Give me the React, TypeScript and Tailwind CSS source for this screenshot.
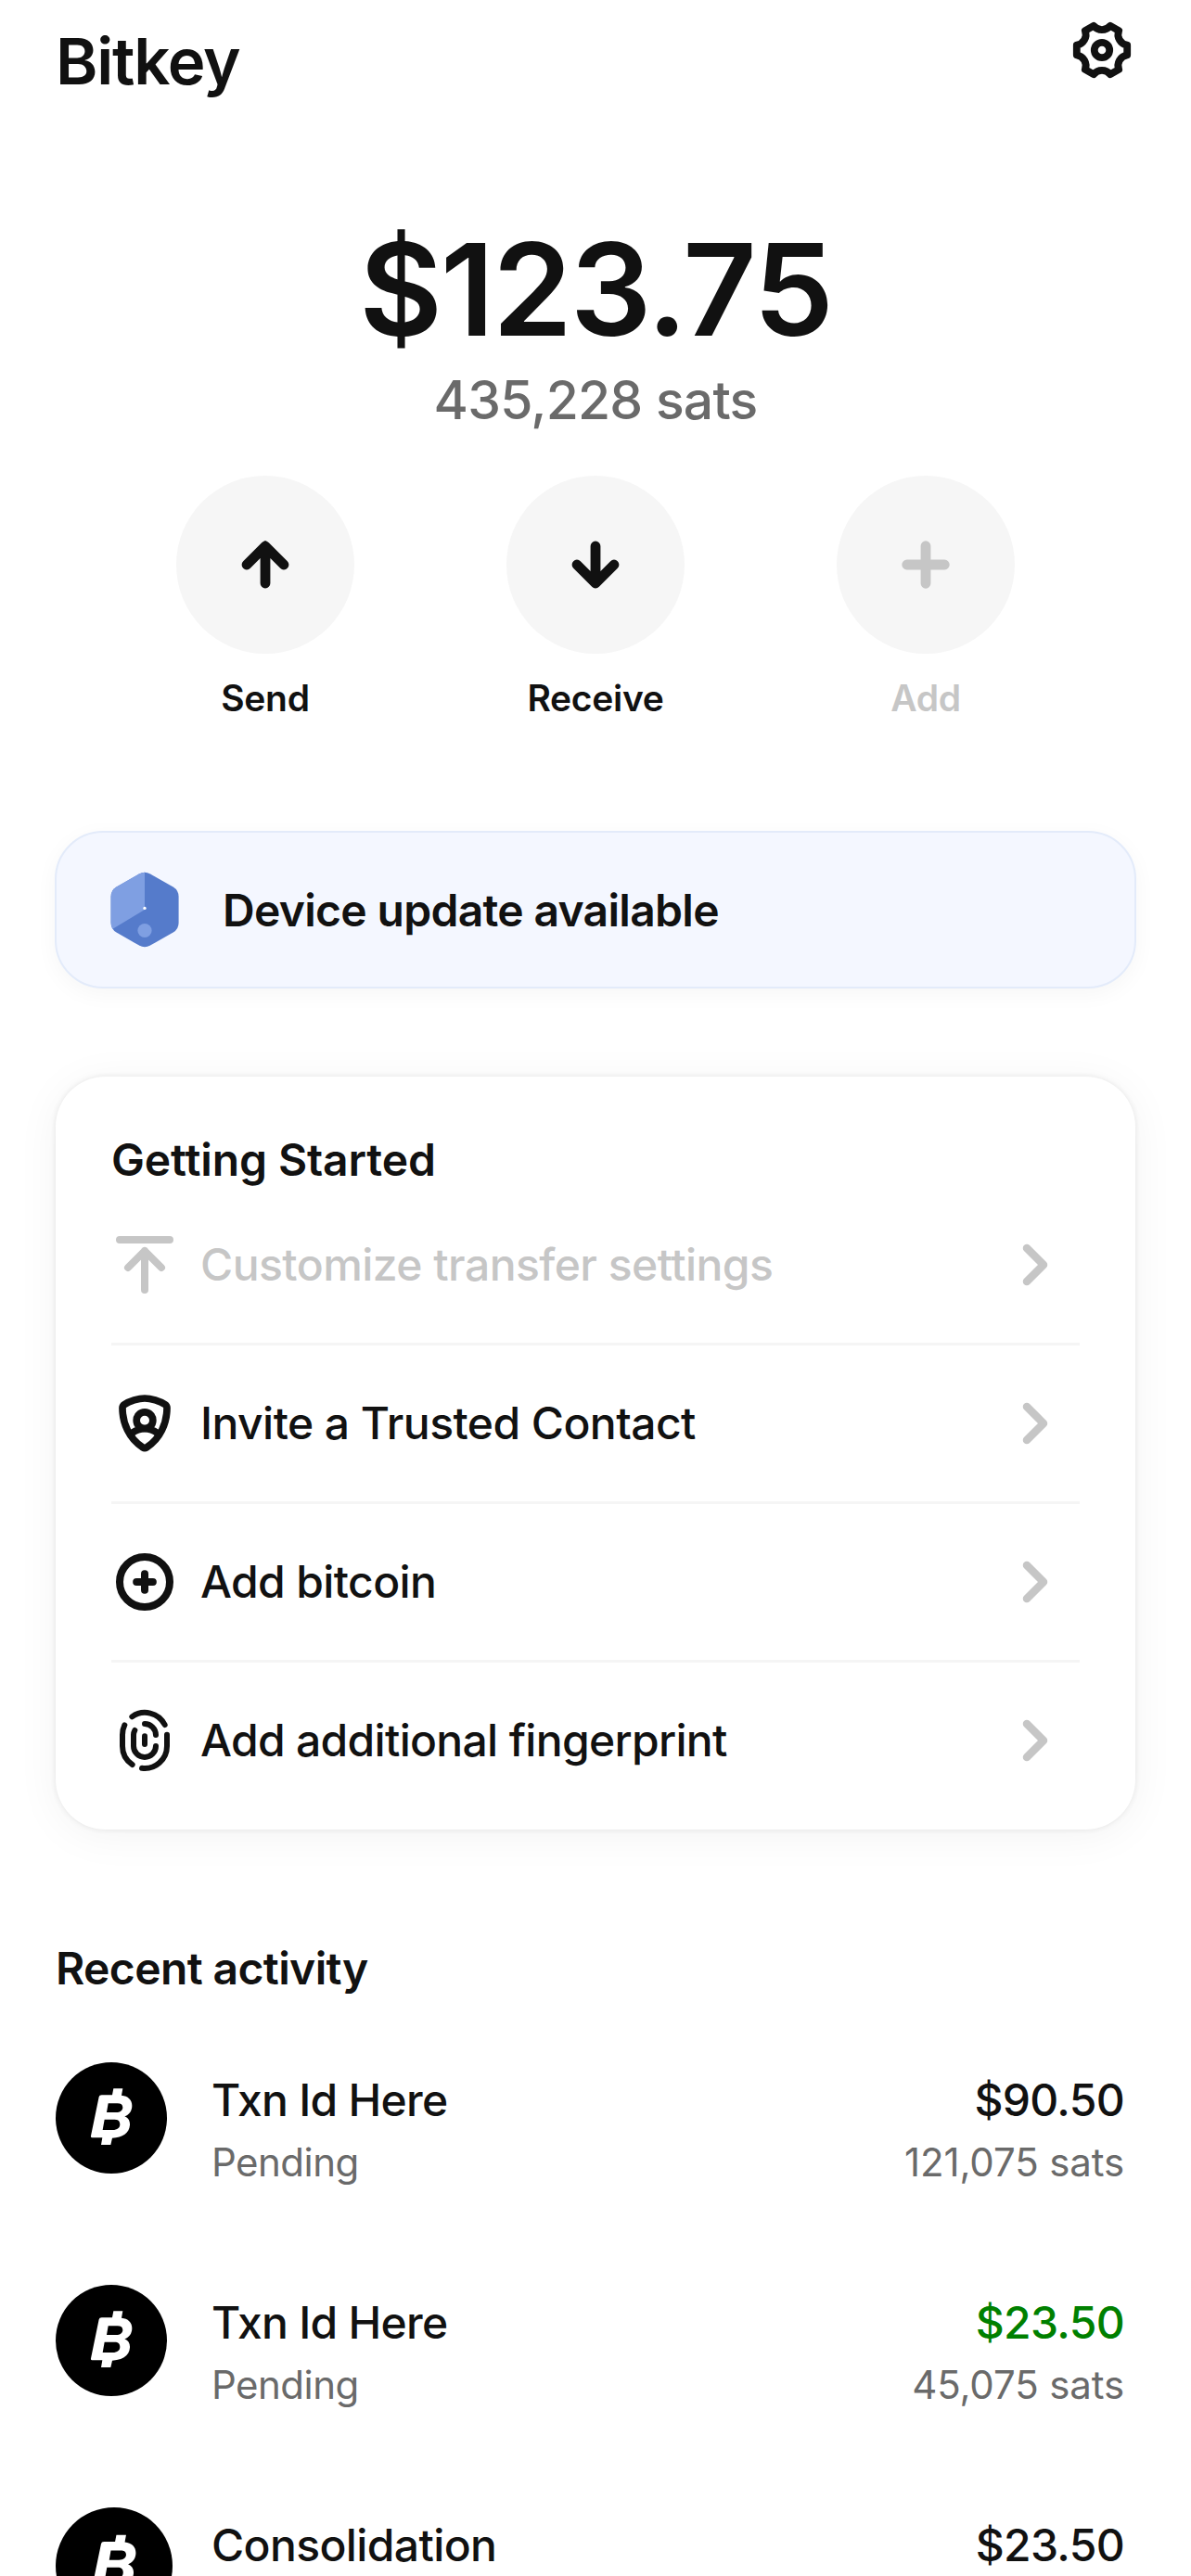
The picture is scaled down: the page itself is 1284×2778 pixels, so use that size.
import type { ReactNode } from 'react';

type IconProps = { className?: string };

function GearIcon() {
  return (
    <svg className="size-[72px]" viewBox="-36 -36 72 72" fill="none" stroke="#111111" strokeWidth="7.8" strokeLinejoin="round">
      <path d="M27.2 -5.3L27.2 5.3A11.500 11.500 0 0 0 18.2 20.9L9 26.2A11.500 11.500 0 0 0 -9 26.2L-18.2 20.9A11.500 11.500 0 0 0 -27.2 5.3L-27.2 -5.3A11.500 11.500 0 0 0 -18.2 -20.9L-9 -26.2A11.500 11.500 0 0 0 9 -26.2L18.2 -20.9A11.500 11.500 0 0 0 27.2 -5.3Z" />
      <circle r="8.2" />
    </svg>
  );
}

function ActionGlyph({ d }: { d: string }) {
  return (
    <svg className="size-[72px]" viewBox="-36 -36 72 72" fill="none" stroke="currentColor" strokeWidth="10.8" strokeLinecap="round" strokeLinejoin="round">
      <path d={d} />
    </svg>
  );
}

function DeviceIcon() {
  return (
    <svg className="size-[84px]" viewBox="114 939 84 84">
      <defs>
        <clipPath id="device-shape">
          <path d="M119.6 967Q119.6 960 125.5 956.4L150 942.4Q156 939 162 942.4L186.7 956.4Q192.6 960 192.6 967V995Q192.6 1002 186.7 1005.6L162 1019.6Q156 1023 150 1019.6L125.5 1005.6Q119.6 1002 119.6 995Z" />
        </clipPath>
      </defs>
      <g clipPath="url(#device-shape)">
        <rect x="114" y="936" width="84" height="90" fill="#557bcb" />
        <path d="M156 936V981L117 1004.5V936Z" fill="#7f9fe2" />
        <circle cx="156" cy="1003.5" r="7.6" fill="#7f9fe2" />
        <circle cx="156" cy="979.4" r="1.7" fill="#ffffff" />
      </g>
    </svg>
  );
}

function LineIcon({ viewBox, width = 24, children }: { viewBox: string; width?: number; children: ReactNode }) {
  return (
    <svg className="size-[72px] shrink-0" viewBox={viewBox} fill="none" stroke="currentColor" strokeWidth={width} strokeLinecap="round" strokeLinejoin="round">
      {children}
    </svg>
  );
}

const TransferIcon = () => (
  <LineIcon viewBox="60 84 216 216">
    <path d="M87 111H249M168 273V147M114 201L168 147L222 201" />
  </LineIcon>
);

const ShieldIcon = () => (
  <LineIcon viewBox="60 57 216 216" width={23}>
    <path d="M168 84C148 84 119 93 102 104Q96 108 96 115C96 165 118 215 162 243Q168 247 174 243C218 215 240 165 240 115Q240 108 234 104C217 93 188 84 168 84Z" />
    <circle cx="168" cy="155" r="26.5" />
    <path d="M126 197Q168 167 210 197" strokeLinecap="butt" />
  </LineIcon>
);

const PlusCircleIcon = () => (
  <LineIcon viewBox="60 90 216 216">
    <circle cx="168" cy="198" r="81" />
    <path d="M141.500 198H194.500M168 171.500V224.500" />
  </LineIcon>
);

const FingerprintIcon = () => (
  <LineIcon viewBox="60 603 216 216" width={18}>
    <path d="M127 634A72 72 0 0 1 233 660" />
    <path d="M103 661A72 72 0 0 0 96 693V729A72 72 0 0 0 128 789" />
    <path d="M240 692V729A72 72 0 0 1 159 800.500" />
    <path d="M168 657A36 36 0 0 1 204 693" />
    <path d="M136 678Q132 685 132 693V729A36 36 0 0 0 204 729" />
    <path d="M168 697V723" />
  </LineIcon>
);

function Chevron() {
  return (
    <svg className="size-[72px] shrink-0" viewBox="0 0 72 72" fill="none" stroke="#c6c6c6" strokeWidth="8.5" strokeLinecap="round" strokeLinejoin="round">
      <path d="M15 18L33 36L15 54" />
    </svg>
  );
}

function BitcoinBadge({ className = '' }: IconProps) {
  return (
    <svg className={`${className} shrink-0`} viewBox="0 0 360 360">
      <circle cx="180" cy="180" r="180" fill="#000000" />
      <path
        fill="#ffffff"
        fillRule="evenodd"
        d="M149 106H183L187 85H217L213 107C234 109 247 121 247 140C247 158 237 170 223 175C235 180 241 190 240 203C238 229 217 243 183 245L178 267H147L151 244H118Q113 244 114 238L140 112Q141 106 149 106ZM170 133L165 162H195C209 162 217 155 217 146C217 137 211 133 200 133ZM158 185L152 219H184C200 219 208 212 208 201C208 190 202 185 191 185Z"
      />
    </svg>
  );
}

const actions = [
  { label: 'Send', d: 'M0 20V-20M-20 0L0 -20L20 0', tone: 'text-[#111111]' },
  { label: 'Receive', d: 'M0 -20V20M-20 0L0 20L20 0', tone: 'text-[#111111]' },
  { label: 'Add', d: 'M0 -20.300V20.300M-20.300 0H20.300', tone: 'text-[#c6c6c6]' },
];

const steps = [
  { label: 'Customize transfer settings', icon: <TransferIcon />, tone: 'text-[#c6c6c6]', spacing: 'tracking-[-0.011em]' },
  { label: 'Invite a Trusted Contact', icon: <ShieldIcon />, tone: 'text-[#111111]', spacing: 'tracking-[-0.0116em]' },
  { label: 'Add bitcoin', icon: <PlusCircleIcon />, tone: 'text-[#111111]', spacing: 'tracking-[-0.013em]' },
  { label: 'Add additional fingerprint', icon: <FingerprintIcon />, tone: 'text-[#111111]', spacing: 'tracking-[-0.0143em]' },
];

const transactions = [
  { title: 'Txn Id Here', note: 'Pending', amount: '$90.50', sats: '121,075 sats', titleSpacing: 'tracking-[-0.0154em]', tone: 'text-[#111111]', badge: 'size-[120px] mr-[48px]' },
  { title: 'Txn Id Here', note: 'Pending', amount: '$23.50', sats: '45,075 sats', titleSpacing: 'tracking-[-0.0154em]', tone: 'text-[#008000]', badge: 'size-[120px] mr-[48px]' },
  { title: 'Consolidation', note: '', amount: '$23.50', sats: '', titleSpacing: 'tracking-[-0.0129em]', tone: 'text-[#111111]', badge: 'size-[126px] mr-[42px]' },
];

export default function App() {
  return (
    <main className="h-[2778px] w-[1284px] overflow-hidden bg-white font-['Inter',sans-serif] text-[#111111] antialiased">
      <header className="flex h-[228px] items-start justify-between px-[60px] pt-[18px]">
        <h1 className="mt-[6px] text-[69px] leading-[84px] font-semibold tracking-[-0.018em]">Bitkey</h1>
        <button className="size-[72px]" aria-label="Settings">
          <GearIcon />
        </button>
      </header>

      <section className="flex flex-col items-center">
        <p className="text-[138px] leading-[168px] font-semibold tracking-[-0.016em]">$123.75</p>
        <p className="text-[57px] leading-[72px] font-medium tracking-[-0.0136em] text-[#6a6a6a]">435,228 sats</p>
      </section>

      <nav className="mt-[45px] flex justify-center gap-[164px]">
        {actions.map((a) => (
          <div key={a.label} className={`flex w-[192px] flex-col items-center ${a.tone}`}>
            <button className="flex size-[192px] items-center justify-center rounded-full bg-[#f6f6f6]" aria-label={a.label}>
              <ActionGlyph d={a.d} />
            </button>
            <span className="mt-[24px] text-[39px] leading-[48px] font-semibold tracking-[-0.0075em]">{a.label}</span>
          </div>
        ))}
      </nav>

      <section className="mx-[59px] mt-[119px] flex h-[170px] items-center rounded-[52px] border-2 border-[#e3ebfa] bg-[#f4f7ff] pl-[53px] shadow-[0_6px_24px_rgba(0,0,0,0.04)]">
        <DeviceIcon />
        <p className="mt-px ml-[42px] text-[48px] leading-[72px] font-semibold tracking-[-0.0145em]">Device update available</p>
      </section>

      <section className="mx-[60px] mt-[95px] h-[812px] rounded-[54px] bg-white px-[60px] pt-[60px] shadow-[0_0_6px_rgba(0,0,0,0.09),0_6px_48px_rgba(0,0,0,0.05)]">
        <h2 className="text-[48px] leading-[59px] font-semibold tracking-[-0.0023em]">Getting Started</h2>
        <ul>
          {steps.map((s) => (
            <li
              key={s.label}
              className={`flex h-[171px] items-center border-b-3 border-[#f5f5f5] last:h-[168px] last:border-b-0 ${s.tone}`}
            >
              {s.icon}
              <span className={`ml-[24px] grow text-[48px] leading-[72px] font-medium ${s.spacing}`}>{s.label}</span>
              <Chevron />
            </li>
          ))}
        </ul>
      </section>

      <section className="mt-[120px] px-[60px]">
        <h2 className="text-[48px] leading-[60px] font-semibold tracking-[-0.0128em]">Recent activity</h2>
        <ul className="mt-[71px] pr-[12px]">
          {transactions.map((t, i) => (
            <li key={i} className="flex h-[240px] items-start">
              <BitcoinBadge className={t.badge} />
              <div className="mt-[5px] flex grow flex-col">
                <span className={`text-[48px] leading-[72px] font-medium ${t.titleSpacing}`}>{t.title}</span>
                <span className="mt-[1px] text-[42px] leading-[60px] tracking-[-0.0124em] text-[#6a6a6a]">{t.note}</span>
              </div>
              <div className="mt-[5px] flex flex-col items-end">
                <span className={`text-[48px] leading-[72px] font-medium tracking-[-0.014em] ${t.tone}`}>{t.amount}</span>
                <span className="mt-[1px] text-[42px] leading-[60px] tracking-[-0.003em] text-[#6a6a6a]">{t.sats}</span>
              </div>
            </li>
          ))}
        </ul>
      </section>
    </main>
  );
}
